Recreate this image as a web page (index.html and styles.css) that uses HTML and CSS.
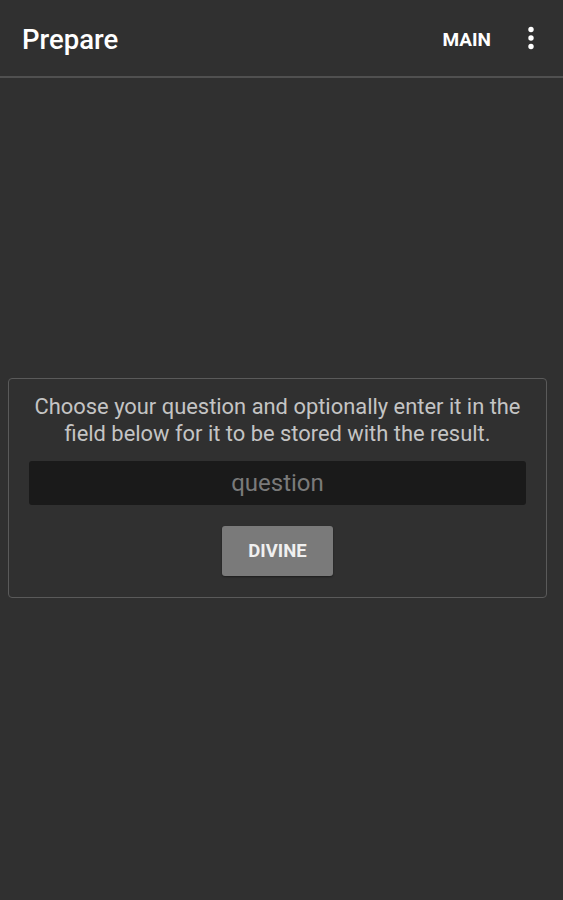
FILE: index.html
```html
<!DOCTYPE html>
<html>
<head>
<meta charset="utf-8">
<link rel="stylesheet" href="styles.css">
</head>
<body>
<div class="appbar">
  <div class="title">Prepare</div>
  <div class="actions">
    <span class="action">MAIN</span>
    <svg class="more" width="8" height="24" viewBox="0 0 8 24"><circle cx="4" cy="3.5" r="2.7" fill="#fff"/><circle cx="4" cy="12" r="2.7" fill="#fff"/><circle cx="4" cy="20.5" r="2.7" fill="#fff"/></svg>
  </div>
</div>
<div class="content">
  <div class="card">
    <p class="prompt">Choose your question and optionally enter it in the field below for it to be stored with the result.</p>
    <div class="field">question</div>
    <div class="btn">DIVINE</div>
  </div>
</div>
</body>
</html>
```
FILE: styles.css
```css
html, body { margin: 0; padding: 0; }
body {
  background: #303030;
  font-family: Roboto, "Noto Sans", sans-serif;
  width: 563px;
  height: 900px;
  overflow: hidden;
}
.appbar {
  height: 76px;
  border-bottom: 2px solid #505050;
  display: flex;
  align-items: center;
  justify-content: space-between;
  padding: 0 29px 0 22px;
  box-sizing: content-box;
}
.title {
  color: #fff;
  font-size: 27.5px;
  font-weight: 500;
  margin-top: 2px;
}
.actions {
  display: flex;
  align-items: center;
}
.action {
  color: #fff;
  font-size: 19px;
  font-weight: 700;
  margin-right: 36px;
  margin-top: 3px;
}
.more { margin-top: 0; margin-right: -1px; }
.content {
  padding: 300px 16px 0 8px;
}
.card {
  border: 1.5px solid #5a5a5a;
  border-radius: 4px;
  padding: 14px 20px 21px 20px;
  display: flex;
  flex-direction: column;
  align-items: center;
}
.prompt {
  margin: 0 0 14px 0;
  color: #c4c4c4;
  font-size: 21.9px;
  line-height: 27px;
  text-align: center;
  padding: 0;
}
.field {
  align-self: stretch;
  height: 44px;
  background: #1a1a1a;
  border-radius: 3px;
  color: #7a7a7a;
  font-size: 24px;
  display: flex;
  align-items: center;
  justify-content: center;
}
.btn {
  margin-top: 21px;
  width: 111px;
  height: 50px;
  background: #7a7a7a;
  border-radius: 3px;
  color: #f0f0f0;
  font-weight: 700;
  font-size: 18.5px;
  display: flex;
  align-items: center;
  justify-content: center;
  box-shadow: 0 1px 2px rgba(0,0,0,0.4);
}
```
